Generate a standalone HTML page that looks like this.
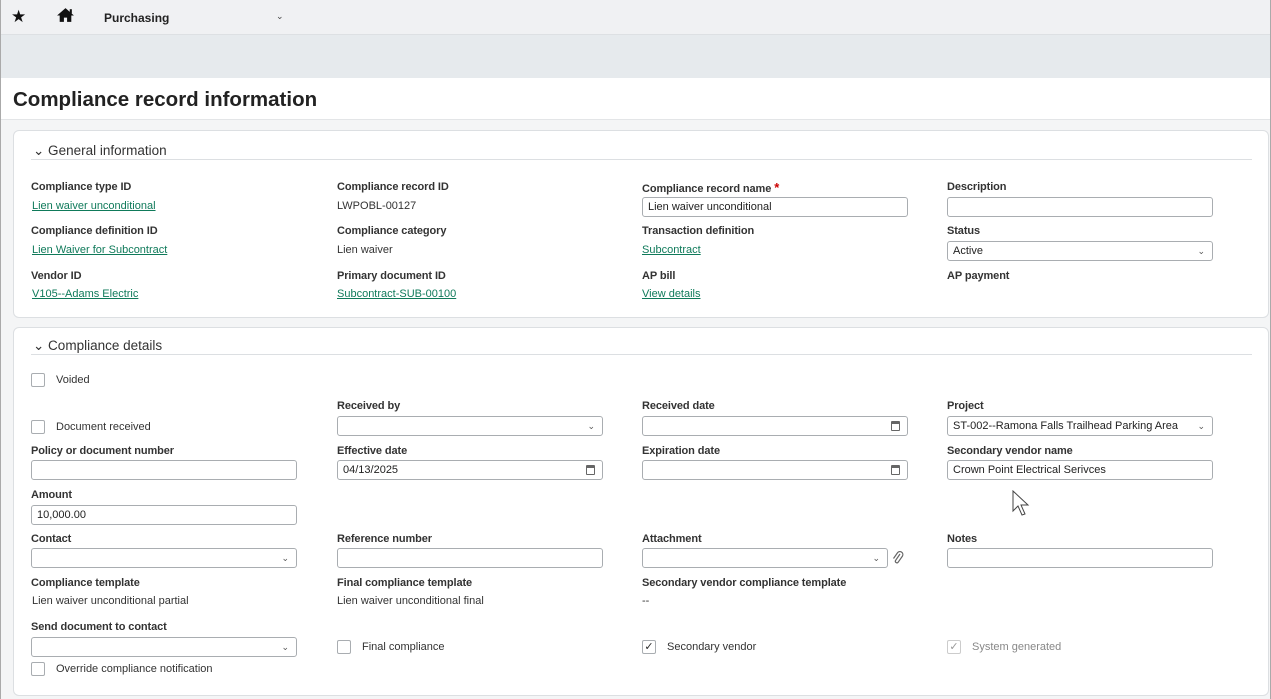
<!DOCTYPE html>
<html><head><style>
*{box-sizing:border-box;margin:0;padding:0}
body{width:1271px;height:699px;overflow:hidden;background:#f4f5f6;font-family:"Liberation Sans",Arial,sans-serif;color:#2b2b2b;position:relative;font-size:11px}
.a{position:absolute}
.top{left:0;top:0;width:1271px;height:35px;background:#f0f1f3;border-bottom:1px solid #dde0e3}
.band{left:0;top:35px;width:1271px;height:43px;background:#e6eaed}
.tarea{left:0;top:78px;width:1271px;height:42px;background:#fff;border-bottom:1px solid #e3e5e7}
.card{background:#fff;border:1px solid #dcdfe2;border-radius:6px}
.lbl{font-size:11px;color:#333;font-weight:600;letter-spacing:-0.1px}
.val{font-size:11px;color:#333}
.lnk{font-size:11px;color:#0f7a5a;text-decoration:underline}
.inp{height:20px;border:1px solid #a9adb1;border-radius:3px;background:#fff;font-size:11px;padding:3px 5px;color:#222}
.sec{font-size:13.5px;color:#333}
.hr{height:1px;background:#dcdfe2}
.cb{width:14px;height:14px;border:1px solid #a9adb1;border-radius:2px;background:#fff}
.chev{position:absolute;right:7px;top:4px;font-size:9px;color:#555}
.cal{position:absolute;right:7px;top:4px;width:9px;height:10px;border:1px solid #666;border-top-width:3px;border-radius:1px}
.vl{top:0;width:1px;height:699px;background:#aaa}
</style></head><body>
<div class="a top"></div>
<div class="a" style="left:11px;top:7px;font-size:17px;color:#111">★</div>
<svg class="a" style="left:56px;top:7px" width="19" height="16" viewBox="0 0 18 15"><path d="M9 1L1 8h2.5v6h4v-4h3v4h4V8H17z" fill="#111"/><rect x="13" y="2" width="2" height="4" fill="#111"/></svg>
<div class="a" style="left:104px;top:11px;font-size:12px;font-weight:600;color:#222">Purchasing</div>
<div class="a" style="left:276px;top:11px;font-size:9px;color:#444">⌄</div>
<div class="a band"></div>
<div class="a tarea"></div>
<div class="a" style="left:13px;top:88px;font-size:20.5px;font-weight:600;color:#222">Compliance record information</div>

<div class="a card" style="left:13px;top:130px;width:1256px;height:188px"></div>
<div class="a sec" style="left:33px;top:143px">⌄ General information</div>
<div class="a hr" style="left:31px;top:159px;width:1221px"></div>

<div class="a lbl" style="left:31px;top:181px">Compliance type ID</div>
<div class="a lnk" style="left:32px;top:200px">Lien waiver unconditional</div>
<div class="a lbl" style="left:337px;top:181px">Compliance record ID</div>
<div class="a val" style="left:337px;top:200px">LWPOBL-00127</div>
<div class="a lbl" style="left:642px;top:180px">Compliance record name <span style="color:#c00;font-size:13px">*</span></div>
<div class="a inp" style="left:642px;top:197px;width:266px">Lien waiver unconditional</div>
<div class="a lbl" style="left:947px;top:181px">Description</div>
<div class="a inp" style="left:947px;top:197px;width:266px"></div>

<div class="a lbl" style="left:31px;top:225px">Compliance definition ID</div>
<div class="a lnk" style="left:32px;top:244px">Lien Waiver for Subcontract</div>
<div class="a lbl" style="left:337px;top:225px">Compliance category</div>
<div class="a val" style="left:337px;top:244px">Lien waiver</div>
<div class="a lbl" style="left:642px;top:225px">Transaction definition</div>
<div class="a lnk" style="left:642px;top:244px">Subcontract</div>
<div class="a lbl" style="left:947px;top:225px">Status</div>
<div class="a inp" style="left:947px;top:241px;width:266px">Active<span class="chev">⌄</span></div>

<div class="a lbl" style="left:31px;top:270px">Vendor ID</div>
<div class="a lnk" style="left:32px;top:288px">V105--Adams Electric</div>
<div class="a lbl" style="left:337px;top:270px">Primary document ID</div>
<div class="a lnk" style="left:337px;top:288px">Subcontract-SUB-00100</div>
<div class="a lbl" style="left:642px;top:270px">AP bill</div>
<div class="a lnk" style="left:642px;top:288px">View details</div>
<div class="a lbl" style="left:947px;top:270px">AP payment</div>

<div class="a card" style="left:13px;top:327px;width:1256px;height:369px"></div>
<div class="a sec" style="left:33px;top:338px">⌄ Compliance details</div>
<div class="a hr" style="left:31px;top:354px;width:1221px"></div>

<div class="a cb" style="left:31px;top:373px"></div>
<div class="a val" style="left:56px;top:374px">Voided</div>

<div class="a cb" style="left:31px;top:420px"></div>
<div class="a val" style="left:56px;top:421px">Document received</div>
<div class="a lbl" style="left:337px;top:400px">Received by</div>
<div class="a inp" style="left:337px;top:416px;width:266px"><span class="chev">⌄</span></div>
<div class="a lbl" style="left:642px;top:400px">Received date</div>
<div class="a inp" style="left:642px;top:416px;width:266px"><span class="cal"></span></div>
<div class="a lbl" style="left:947px;top:400px">Project</div>
<div class="a inp" style="left:947px;top:416px;width:266px">ST-002--Ramona Falls Trailhead Parking Area<span class="chev">⌄</span></div>

<div class="a lbl" style="left:31px;top:445px">Policy or document number</div>
<div class="a inp" style="left:31px;top:460px;width:266px"></div>
<div class="a lbl" style="left:337px;top:445px">Effective date</div>
<div class="a inp" style="left:337px;top:460px;width:266px">04/13/2025<span class="cal"></span></div>
<div class="a lbl" style="left:642px;top:445px">Expiration date</div>
<div class="a inp" style="left:642px;top:460px;width:266px"><span class="cal"></span></div>
<div class="a lbl" style="left:947px;top:445px">Secondary vendor name</div>
<div class="a inp" style="left:947px;top:460px;width:266px">Crown Point Electrical Serivces</div>
<svg class="a" style="left:1012px;top:490px" width="20" height="28" viewBox="0 0 20 28"><path d="M1 1v20l5-5 4 9 3-1-4-9h7z" fill="#fff" stroke="#444" stroke-width="1"/></svg>

<div class="a lbl" style="left:31px;top:489px">Amount</div>
<div class="a inp" style="left:31px;top:505px;width:266px">10,000.00</div>

<div class="a lbl" style="left:31px;top:533px">Contact</div>
<div class="a inp" style="left:31px;top:548px;width:266px"><span class="chev">⌄</span></div>
<div class="a lbl" style="left:337px;top:533px">Reference number</div>
<div class="a inp" style="left:337px;top:548px;width:266px"></div>
<div class="a lbl" style="left:642px;top:533px">Attachment</div>
<div class="a inp" style="left:642px;top:548px;width:246px"><span class="chev">⌄</span></div>
<svg class="a" style="left:892px;top:550px" width="12" height="16" viewBox="0 0 12 16"><path d="M8 4L3.5 10.5a1.6 1.6 0 0 0 2.6 1.8L10.5 6a3 3 0 0 0-4.9-3.4L1.5 8.5" fill="none" stroke="#666" stroke-width="1.2"/></svg>
<div class="a lbl" style="left:947px;top:533px">Notes</div>
<div class="a inp" style="left:947px;top:548px;width:266px"></div>

<div class="a lbl" style="left:31px;top:577px">Compliance template</div>
<div class="a val" style="left:32px;top:595px">Lien waiver unconditional partial</div>
<div class="a lbl" style="left:337px;top:577px">Final compliance template</div>
<div class="a val" style="left:337px;top:595px">Lien waiver unconditional final</div>
<div class="a lbl" style="left:642px;top:577px">Secondary vendor compliance template</div>
<div class="a val" style="left:642px;top:595px">--</div>

<div class="a lbl" style="left:31px;top:621px">Send document to contact</div>
<div class="a inp" style="left:31px;top:637px;width:266px"><span class="chev">⌄</span></div>
<div class="a cb" style="left:337px;top:640px"></div>
<div class="a val" style="left:362px;top:641px">Final compliance</div>
<div class="a cb" style="left:642px;top:640px;font-size:11px;line-height:12px;text-align:center">✓</div>
<div class="a val" style="left:667px;top:641px">Secondary vendor</div>
<div class="a cb" style="left:947px;top:640px;font-size:11px;line-height:12px;text-align:center;color:#999;border-color:#ccc">✓</div>
<div class="a val" style="left:972px;top:641px;color:#888">System generated</div>
<div class="a cb" style="left:31px;top:662px"></div>
<div class="a val" style="left:56px;top:663px">Override compliance notification</div>
<div class="a vl" style="left:0"></div>
<div class="a vl" style="left:1270px"></div>
</body></html>
